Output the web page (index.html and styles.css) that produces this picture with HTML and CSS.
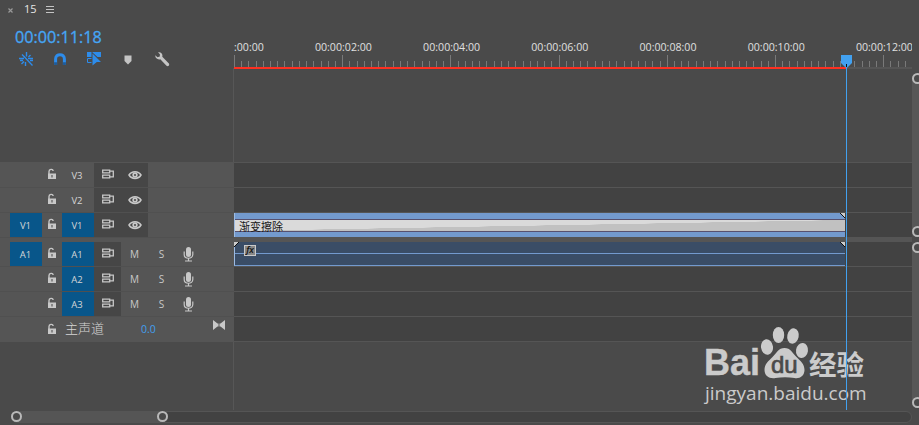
FILE: index.html
```html
<!DOCTYPE html>
<html lang="zh-CN">
<head>
    <meta charset="UTF-8">
    <title>Timeline</title>
    <link rel="stylesheet" href="styles.css">
</head>
<body>
    <!-- shared icons -->
    <svg class="symbols">
        <symbol id="lock" viewBox="0 0 10 12">
            <path d="M2 6V3.5C2 1 5.8.5 6.2 3" fill="none" stroke="currentColor" stroke-width="1.4"/>
            <path d="M1 5.5h8V11H1z" fill="currentColor"/>
            <path d="M4.5 7h1v2.5h-1z" fill="#444"/>
        </symbol>
        <symbol id="sync" viewBox="0 0 13 11">
            <path d="M.7 1.2h7v2.6h-7zM.7 6.2h7v2.6h-7zM8 2.2h3.3v5.6H8" fill="none" stroke="currentColor" stroke-width="1.3"/>
        </symbol>
        <symbol id="eye" viewBox="0 0 14 10">
            <path d="M1 5C3.7.5 10.3.5 13 5 10.3 9.5 3.7 9.5 1 5z" fill="none" stroke="currentColor" stroke-width="1.5"/>
            <circle cx="7" cy="5" r="2.7" fill="currentColor"/>
            <circle cx="7" cy="5" r="1" fill="#444"/>
        </symbol>
        <symbol id="mic" viewBox="0 0 11 15">
            <rect x="3" y="0" width="5" height="10" rx="2.5" fill="currentColor"/>
            <path d="M1.2 4.5v3C1.2 12.5 9.8 12.5 9.8 7.5v-3M5.5 11v3M2 14h7" fill="none" stroke="currentColor" stroke-width="1.2"/>
        </symbol>
    </svg>

    <div class="panel">
        <div class="main">
            <div class="side">
                <div class="tab">
                    <svg width="5" height="5" viewBox="0 0 5 5"><path d="M.5.5l4 4M4.5.5l-4 4" stroke="#999" stroke-width="1.2"/></svg>
                    <span>15</span>
                    <svg width="8" height="8" viewBox="0 0 8 8"><path d="M0 .5h8M0 3.5h8M0 6.5h8" stroke="#c4c4c4"/></svg>
                </div>
                <div class="timecode">00:00:11:18</div>
                <div class="tools">
                    <svg width="15" height="15" viewBox="0 0 15 15" stroke="#2d8ceb" fill="none">
                        <path d="M7.5 0v4.5M6.5 10v4M3 2.5L5.500 5M11.5 3l-2 2M2.5 12L5 9.5M0 6.5h5M1 8.5h3M9 6.5h5M11 8.5h3" stroke-width="1.4"/>
                        <path d="M5 4.5l8.5 9" stroke-width="1.3"/>
                    </svg>
                    <svg width="12" height="13" viewBox="0 0 12 13" fill="none" stroke-width="3">
                        <path d="M1.6 12V6C1.6.2 10.4.2 10.4 6v6" stroke="#2d8ceb"/>
                        <path d="M1.6 9.3V12M10.4 9.3V12" stroke="#205b98"/>
                    </svg>
                    <svg width="15" height="14" viewBox="0 0 15 14">
                        <path d="M0 0h4.5v5H0zM5.5 0H14v5h-3.5L5.5.5zM5.5 1.5L14 10H9.8l-4.3 3.5z" fill="#2d8ceb"/>
                        <path d="M4.5 6.5h-4v4h4" fill="none" stroke="#2d8ceb"/>
                    </svg>
                    <svg width="8" height="10" viewBox="0 0 8 10"><path d="M.5.5h7V6L4 9.5.5 6z" fill="#c4c4c4"/></svg>
                    <svg width="15" height="15" viewBox="0 0 15 15">
                        <path d="M3 .3C5.8-.4 8 1.600 7.300 4.700l6.600 6.800c1 1.600-.9 3.500-2.400 2.300L5.300 7.200C2.600 8 0 6 .3 3.300L2.500 5.200 4.800 4.500 4.900 2.200z" fill="#c4c4c4"/>
                    </svg>
                </div>
            </div>

            <div class="ruler-area">
                <div class="ruler">
                    <svg id="ruler" width="678" height="33"></svg>
                    <div class="work-bar"></div>
                </div>
            </div>

            <div class="heads">
                <div class="head">
                    <svg class="lock"><use href="#lock"/></svg>
                    <span class="name">V3</span>
                    <span class="cell dark"><svg class="sync"><use href="#sync"/></svg></span>
                    <span class="cell dark"><svg width="14" height="10"><use href="#eye"/></svg></span>
                </div>
                <div class="head">
                    <svg class="lock"><use href="#lock"/></svg>
                    <span class="name">V2</span>
                    <span class="cell dark"><svg class="sync"><use href="#sync"/></svg></span>
                    <span class="cell dark"><svg width="14" height="10"><use href="#eye"/></svg></span>
                </div>
                <div class="head">
                    <span class="source">V1</span>
                    <svg class="lock"><use href="#lock"/></svg>
                    <span class="name on">V1</span>
                    <span class="cell dark"><svg class="sync"><use href="#sync"/></svg></span>
                    <span class="cell dark"><svg width="14" height="10"><use href="#eye"/></svg></span>
                </div>
                <div class="split"></div>
                <div class="head">
                    <span class="source">A1</span>
                    <svg class="lock"><use href="#lock"/></svg>
                    <span class="name on">A1</span>
                    <span class="cell dark"><svg class="sync"><use href="#sync"/></svg></span>
                    <span class="cell">M</span><span class="cell">S</span>
                    <span class="cell"><svg width="11" height="15"><use href="#mic"/></svg></span>
                </div>
                <div class="head">
                    <svg class="lock"><use href="#lock"/></svg>
                    <span class="name on">A2</span>
                    <span class="cell dark"><svg class="sync"><use href="#sync"/></svg></span>
                    <span class="cell">M</span><span class="cell">S</span>
                    <span class="cell"><svg width="11" height="15"><use href="#mic"/></svg></span>
                </div>
                <div class="head">
                    <svg class="lock"><use href="#lock"/></svg>
                    <span class="name on">A3</span>
                    <span class="cell dark"><svg class="sync"><use href="#sync"/></svg></span>
                    <span class="cell">M</span><span class="cell">S</span>
                    <span class="cell"><svg width="11" height="15"><use href="#mic"/></svg></span>
                </div>
                <div class="head master">
                    <svg class="lock"><use href="#lock"/></svg>
                    <span class="master-name">主声道</span>
                    <span class="level">0.0</span>
                    <svg class="bow" width="12" height="10" viewBox="0 0 12 10"><path d="M0 0l4.500 3.500h3L12 0v10L7.500 6.500h-3L0 10z" fill="#c8c8c8"/><path d="M6 2v6" stroke="#555"/></svg>
                </div>
            </div>

            <div class="lanes">
                <div class="lane"></div>
                <div class="lane"></div>
                <div class="lane">
                    <div class="clip video">
                        <div class="clip-name">渐变擦除</div>
                        <svg class="corner right" viewBox="0 0 5 5"><path d="M0 0h5v5z" fill="#ccc"/><path d="M0 0l5 5" stroke="#111"/></svg>
                    </div>
                </div>
                <div class="split"></div>
                <div class="lane">
                    <div class="clip audio">
                        <span class="fx">fx</span>
                        <svg class="corner left" viewBox="0 0 5 5"><path d="M0 0h5L0 5z" fill="#ccc"/><path d="M0 5l5-5" stroke="#111"/></svg>
                        <svg class="corner right" viewBox="0 0 5 5"><path d="M0 0h5v5z" fill="#ccc"/><path d="M0 0l5 5" stroke="#111"/></svg>
                    </div>
                </div>
                <div class="lane"></div>
                <div class="lane"></div>
                <div class="lane"></div>
            </div>
            <div class="below-heads"></div>
            <div class="below-lanes"></div>
        </div>

        <div class="vbars">
            <div class="vbar top"><i></i><i></i></div>
            <div class="vbar bottom"><i></i><i></i></div>
        </div>
        <div class="hbar"><div class="thumb"><i></i><i></i></div></div>

        <div class="watermark">
            <svg class="paw" width="48" height="54" viewBox="0 0 48 54" fill="#cbcbcb">
                <ellipse cx="6" cy="20" rx="6" ry="7.8" transform="rotate(-8 6 20)"/>
                <ellipse cx="17.5" cy="8" rx="5.7" ry="8"/>
                <ellipse cx="32" cy="9" rx="5.7" ry="7.7" transform="rotate(12 32 9)"/>
                <ellipse cx="41" cy="23.5" rx="6" ry="7.5" transform="rotate(8 41 23.5)"/>
                <path d="M23.5 21c6 0 8 5 12 9s8 7 8 13c0 6-5 9-10 8-6-1-13-1-19 0-6 1-11-2-11-8 0-6 4-9 8-13s6-9 12-9z"/>
            </svg>
            <span class="bai">Bai</span>
            <span class="du">du</span>
            <span class="jingyan">经验</span>
            <span class="site">jingyan.baidu.com</span>
        </div>

        <div class="playhead">
            <svg width="11" height="13" viewBox="0 0 11 13"><path d="M0 0h11v8l-4.500 4.500h-2L0 8z" fill="#42a1f0"/><path d="M5 9h1v3H5z" fill="#111"/></svg>
        </div>
    </div>

    <script>
        const ruler = document.getElementById('ruler');
        const second = 54.1;
        let marks = '';

        // 15 small ticks for every two seconds
        for (let i = 0; i < 95; i++) {
            const x = Math.round(i * second * 2 / 15) + 0.5;
            const top = i % 15 === 0 ? 21 : 27;
            marks += `<path d="M${x} ${top}V33" stroke="#797979"/>`;
        }
        for (let s = 0; s <= 12; s += 2) {
            const time = '00:00:' + String(s).padStart(2, '0') + ':00';
            marks += s === 0
                ? '<text x="0" y="17">:00:00</text>'
                : `<text x="${s * second + 1.2}" y="17" text-anchor="middle" textLength="57">${time}</text>`;
        }
        ruler.innerHTML = marks;
    </script>
</body>
</html>
```

FILE: styles.css
```css
* {
    box-sizing: border-box;
}

body {
    margin: 0;
    background: #4a4a4a;
    color: #d6d6d6;
    font-family: "Open Sans", "Noto Sans CJK SC", sans-serif;
    font-size: 10px;
    overflow: hidden;
}

svg {
    display: block;
    flex-shrink: 0;
}

.symbols {
    position: absolute;
    width: 0;
    height: 0;
}

.panel {
    position: relative;
    width: 919px;
    height: 425px;
    display: grid;
    grid-template-columns: 912px 7px;
    grid-template-rows: 410px 15px;
}

.main {
    display: grid;
    grid-template-columns: 234px 678px;
    grid-template-rows: 162px 180px 68px;
}

/* Top left */
.tab {
    display: flex;
    align-items: center;
    height: 20px;
    padding-left: 8px;
    font-size: 11px;
    color: #e6e6e6;
}

.tab span {
    width: 12px;
    margin: -2px 10px 0 11px;
    line-height: 18px;
}

.timecode {
    height: 31px;
    padding-left: 15px;
    font-size: 16.2px;
    font-weight: 500;
    line-height: 34px;
    color: #45a6f6;
    -webkit-text-stroke: 0.3px #45a6f6;
}

.tools {
    display: flex;
    align-items: center;
    height: 16px;
    padding-left: 19px;
}

.tools svg:nth-child(2) {
    margin-left: 20px;
}

.tools svg:nth-child(3) {
    margin-left: 21px;
}

.tools svg:nth-child(4) {
    margin: 1px 0 0 22px;
}

.tools svg:nth-child(5) {
    margin-left: 23px;
}

/* Ruler */
.ruler-area {
    padding-top: 34px;
}

.ruler-area,
.below-lanes {
    position: relative;
}

.ruler-area::before,
.below-lanes::before {
    content: "";
    position: absolute;
    left: -1px;
    top: 68px;
    bottom: 0;
    width: 1px;
    background: #575757;
}

.below-lanes::before {
    top: 0;
}

.ruler {
    height: 35px;
    background: linear-gradient(#555, #555) 0 100% / 100% 2px no-repeat;
}

.ruler text {
    font-size: 10.6px;
    fill: #e0e0e0;
}

.work-bar {
    width: 612px;
    height: 2px;
    background: #ff3021;
}

/* Track heads */
.heads {
    padding-top: 1px;
    background: #555;
}

.head {
    display: flex;
    align-items: center;
    height: 25px;
    padding-left: 10px;
    border-bottom: 1px solid #505050;
}

.source,
.name,
.cell {
    display: flex;
    align-items: center;
    justify-content: center;
    height: 24px;
}

.source,
.name {
    width: 32px;
    padding-right: 2px;
    font-size: 9.5px;
    font-weight: 500;
}

.source {
    margin-right: -32px;
    padding-right: 1px;
    background: #08568a;
}

.name {
    margin-left: 5px;
}

.on {
    background: #08568a;
}

.cell {
    width: 27px;
    color: #c8c8c8;
}

.dark {
    background: #464646;
}

.lock {
    width: 10px;
    height: 12px;
    margin: -2px 0 0 37px;
    color: #c8c8c8;
}

.sync {
    width: 13px;
    height: 11px;
    margin: -1px 0 0 1px;
}

.split {
    height: 4px;
    background: #555;
}

.master {
    height: 23px;
    border-bottom: 0;
}

.master .lock {
    margin-top: 0;
}

.master-name {
    width: 76px;
    margin: -1px 0 0 8px;
    font-family: "Noto Sans CJK SC", sans-serif;
    font-size: 13px;
    font-weight: 300;
    line-height: 20px;
}

.level {
    width: 72px;
    font-size: 10.5px;
    color: #429fee;
}

.bow {
    margin-top: -8px;
}

/* Lanes */
.lanes {
    border-top: 1px solid #555;
    background: #424242;
}

.lane {
    height: 25px;
    border-bottom: 1px solid #555;
}

.clip {
    position: relative;
    width: 611px;
    height: 24px;
    border-left: 1px solid #9dbbe2;
}

.video {
    padding: 6px 0 5px;
    background: #739ace;
}

.clip-name {
    height: 13px;
    padding-left: 4px;
    border: 1px solid #57516f;
    border-width: 1px 0;
    background: linear-gradient(to bottom right, #dadada 49.5%, #c1c1c1 50.5%);
    color: #171717;
    font-family: "Noto Sans CJK SC", sans-serif;
    font-size: 11px;
    line-height: 12px;
}

.audio {
    padding: 3px 0 0 9px;
    border-bottom: 1px solid #739ace;
    background: linear-gradient(#739ace, #739ace) 0 11px / 100% 1px no-repeat #3a4d66;
}

.fx {
    position: relative;
    display: block;
    width: 12px;
    height: 11px;
    border: 1px solid #c9c9c9;
    background: #888;
    color: #111;
    font-size: 9px;
    font-style: italic;
    font-weight: 600;
    line-height: 8px;
    text-align: center;
}

.corner {
    position: absolute;
    top: 0;
    width: 5px;
    height: 5px;
}

.left {
    left: -1px;
}

.right {
    right: 0;
}

/* Zoom bars */
.vbars {
    padding-top: 73px;
    overflow: hidden;
}

.vbar {
    display: flex;
    flex-direction: column;
    justify-content: space-between;
    width: 12px;
    border-radius: 6px;
    background: #575757;
}

.top {
    height: 164px;
    margin-bottom: 5px;
}

.bottom {
    height: 166px;
}

.vbars i,
.thumb i {
    width: 11px;
    height: 11px;
    border: 2px solid #b9b9b9;
    border-radius: 50%;
    background: #4a4a4a;
}

.hbar {
    width: 901px;
    height: 12px;
    margin: 1px 0 0 11px;
    border: 1px solid #555;
    border-radius: 6px;
    background: #424242;
}

.thumb {
    display: flex;
    justify-content: space-between;
    width: 157px;
    height: 11px;
    margin: -1px 0 0 -1px;
    border-radius: 6px;
    background: #555;
}

/* Playhead and watermark lie over the tracks */
.playhead {
    position: absolute;
    left: 841px;
    top: 55px;
    width: 11px;
    height: 355px;
    background: linear-gradient(#42a1f0, #42a1f0) 5px 12px / 1px 100% no-repeat;
}

.watermark {
    position: absolute;
    left: 704px;
    top: 327px;
    width: 170px;
    height: 80px;
    color: #cbcbcb;
    white-space: nowrap;
}

.watermark > * {
    position: absolute;
}

.paw {
    left: 57px;
    top: 0;
    overflow: visible;
}

.bai {
    left: 0;
    top: 17px;
    font-family: "Liberation Sans", sans-serif;
    font-size: 36px;
    font-weight: bold;
    line-height: 38px;
    -webkit-text-stroke: 0.4px #cbcbcb;
}

.du {
    left: 67px;
    top: 24px;
    color: #4a4a4a;
    font-family: "Liberation Sans", sans-serif;
    font-size: 24px;
    line-height: 28px;
    -webkit-text-stroke: 0.7px #4a4a4a;
}

.jingyan {
    left: 105px;
    top: 21px;
    font-family: "Noto Sans CJK SC", sans-serif;
    font-size: 27.5px;
    font-weight: bold;
    line-height: 30px;
}

.site {
    left: 1px;
    top: 55px;
    font-size: 19px;
    font-weight: 500;
    line-height: 22px;
}
```
